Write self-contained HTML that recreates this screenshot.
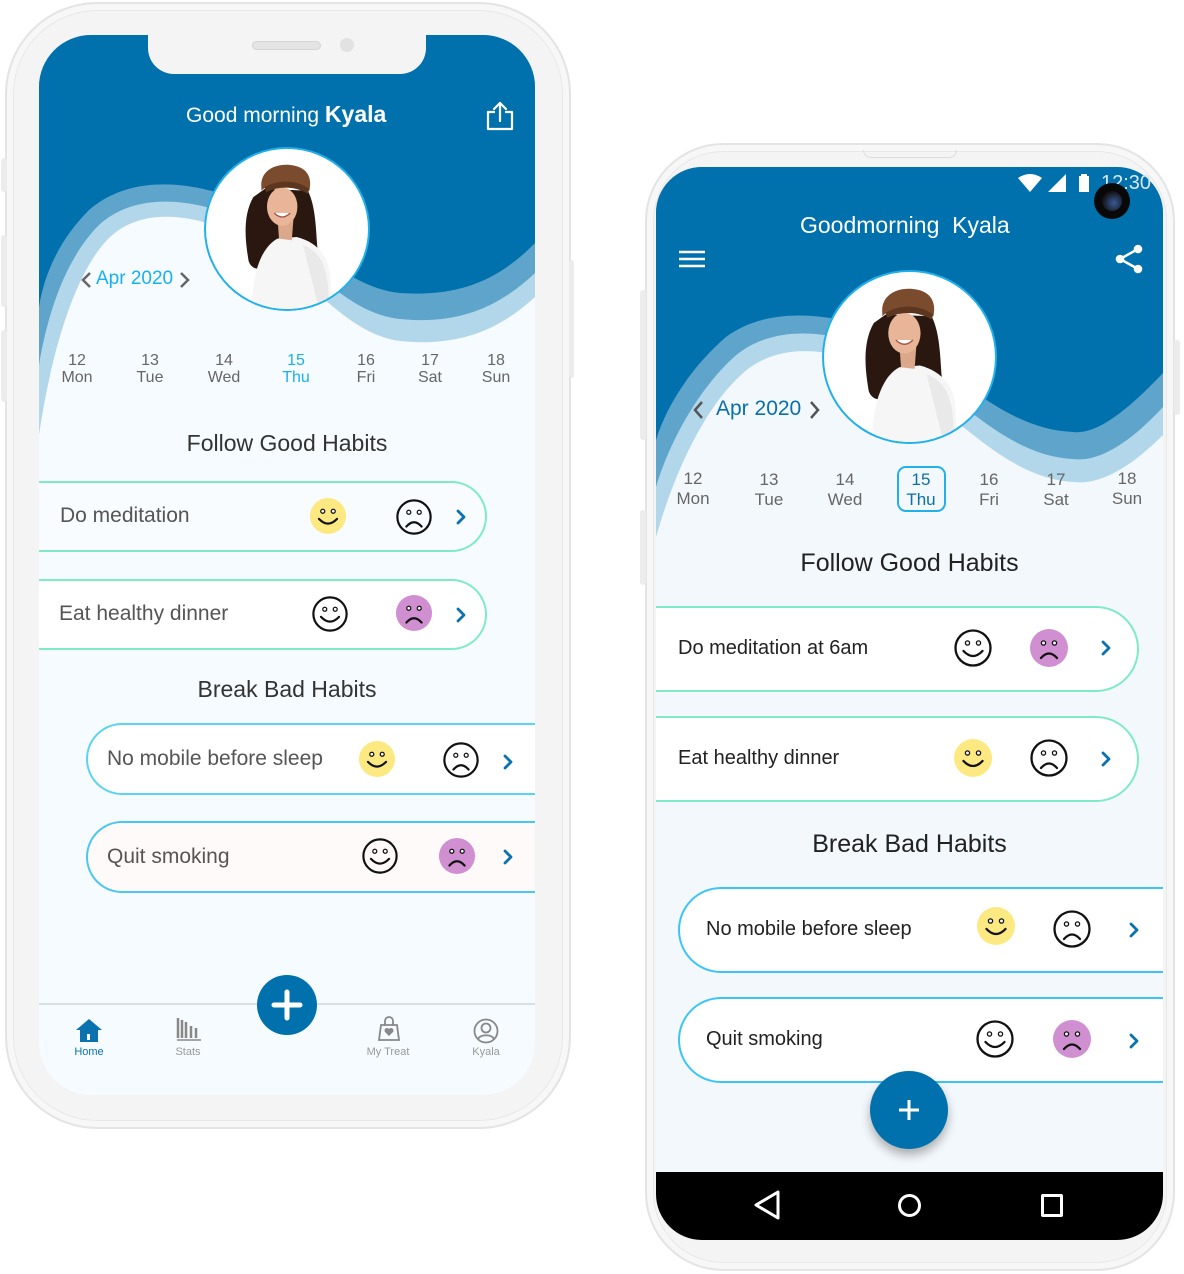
<!DOCTYPE html>
<html><head><meta charset="utf-8">
<style>
*{margin:0;padding:0;box-sizing:border-box}
body{width:1184px;height:1274px;background:#fff;position:relative;overflow:hidden;font-family:"Liberation Sans",sans-serif}
.a{position:absolute}
.t{position:absolute;white-space:nowrap}
.frame{position:absolute;background:#f4f4f4;border:2px solid #e4e4e4;box-shadow:inset 0 0 0 6px #f7f7f7, inset 0 0 0 7px #e8e8e8}
.scr{position:absolute;overflow:hidden}
.card{position:absolute;background:#fff}
.day{position:absolute;width:60px;text-align:center;font-size:16px;line-height:17px;color:#666}
</style></head><body>
<svg width="0" height="0" style="position:absolute">
<defs>
<symbol id="hap" viewBox="0 0 40 40"><circle cx="20" cy="20" r="17.5" fill="none" stroke="#111" stroke-width="2.3"/><circle cx="14.5" cy="15" r="2.1" fill="#fff" stroke="#111" stroke-width="1.3"/><circle cx="25.5" cy="15" r="2.1" fill="#fff" stroke="#111" stroke-width="1.3"/><path d="M10.5 23 Q20 33 29.5 23" fill="none" stroke="#111" stroke-width="2.3" stroke-linecap="round"/></symbol>
<symbol id="sad" viewBox="0 0 40 40"><circle cx="20" cy="20" r="17.5" fill="none" stroke="#111" stroke-width="2.3"/><circle cx="14.5" cy="15" r="2.1" fill="#fff" stroke="#111" stroke-width="1.3"/><circle cx="25.5" cy="15" r="2.1" fill="#fff" stroke="#111" stroke-width="1.3"/><path d="M12 30 Q20 21 28 30" fill="none" stroke="#111" stroke-width="2.3" stroke-linecap="round"/></symbol>
<symbol id="yel" viewBox="0 0 40 40"><circle cx="20" cy="20" r="19" fill="#fde981"/><circle cx="14.5" cy="15" r="2.1" fill="#fff" stroke="#111" stroke-width="1.3"/><circle cx="25.5" cy="15" r="2.1" fill="#fff" stroke="#111" stroke-width="1.3"/><path d="M10.5 23 Q20 33 29.5 23" fill="none" stroke="#111" stroke-width="2.3" stroke-linecap="round"/></symbol>
<symbol id="pur" viewBox="0 0 40 40"><circle cx="20" cy="20" r="19" fill="#d08fd1"/><circle cx="14.5" cy="15" r="2.1" fill="#fff" stroke="#111" stroke-width="1.3"/><circle cx="25.5" cy="15" r="2.1" fill="#fff" stroke="#111" stroke-width="1.3"/><path d="M12 30 Q20 21 28 30" fill="none" stroke="#111" stroke-width="2.3" stroke-linecap="round"/></symbol>
<symbol id="chev" viewBox="0 0 20 20"><path d="M7 4 L13 10 L7 16" fill="none" stroke="#0b72b0" stroke-width="2.8" stroke-linecap="round" stroke-linejoin="round"/></symbol>
<symbol id="av" viewBox="0 0 100 100"><circle cx="50" cy="50" r="50" fill="#fff"/>
<path d="M29 30 C22 42 24 58 26 70 C28 76 34 76 40 73 L46 70 L58 70 C64 73 70 72 69 62 C68 50 68 36 63 26 L36 25 Z" fill="#2a1810"/>
<path d="M28 100 C28 80 33 62 44 56 L56 55 C68 58 76 66 77 80 L78 100 Z" fill="#f6f6f6"/>
<path d="M60 60 C70 64 76 72 76 95 L70 100" fill="#e9e9e9"/>
<path d="M44 42 L45 56 L53 57 L54 44 Z" fill="#dba88c"/>
<ellipse cx="47" cy="36" rx="9.5" ry="12" fill="#e8b598"/>
<path d="M42 40 Q47 45 52 40" fill="#fff" stroke="#a6564a" stroke-width="0.8"/>
<path d="M34 24 C33 14 42 9 52 10 C62 11 66 17 64 26 C60 23 52 20 46 21 C40 22 36 24 34 26 Z" fill="#7b4b2e"/>
<path d="M36 24 C44 19 56 19 64 25 L63 28 C55 23 45 23 37 27 Z" fill="#5d361f"/>
</symbol>
</defs></svg>

<!-- LEFT PHONE -->
<div class="frame" style="left:5px;top:2px;width:566px;height:1127px;border-radius:92px"></div>
<div class="a" style="left:1px;top:158px;width:6px;height:34px;background:#ececec;border-radius:3px"></div>
<div class="a" style="left:1px;top:235px;width:6px;height:72px;background:#ececec;border-radius:3px"></div>
<div class="a" style="left:1px;top:330px;width:6px;height:72px;background:#ececec;border-radius:3px"></div>
<div class="a" style="left:569px;top:260px;width:5px;height:118px;background:#ececec;border-radius:3px"></div>
<div class="scr" style="left:39px;top:35px;width:496px;height:1060px;border-radius:52px;background:#f5fbfe">
<svg class="a" style="left:0;top:0" width="496" height="420">
<path d="M0,0 H496 V262 C460,295 420,312 361,306 C300,298 260,226 200,199 C150,178 100,172 68,205 C40,235 15,300 0,400 Z" fill="#b3d7ea"/>
<path d="M0,0 H496 V238 C460,272 420,290 361,284 C300,278 260,210 200,183 C150,162 95,158 60,190 C30,220 10,270 0,330 Z" fill="#5fa5cb"/>
<path d="M0,0 H496 V208 C460,245 420,262 361,258 C300,252 260,190 200,165 C150,145 90,140 50,175 C20,205 5,240 0,272 Z" fill="#0071ad"/>
</svg>
<div class="a" style="left:109px;top:0;width:278px;height:39px;background:#f4f4f4;border-radius:0 0 26px 26px"></div>
<div class="a" style="left:213px;top:6px;width:69px;height:9px;background:#e4e4e4;border:1px solid #d4d4d4;border-radius:5px"></div>
<div class="a" style="left:301px;top:3px;width:14px;height:14px;background:#e2e2e2;border-radius:50%"></div>
</div>
<div class="t" style="left:186px;top:101px;color:#fff;font-size:21px">Good morning <b style="font-size:23px">Kyala</b></div>
<svg class="a" style="left:485px;top:101px" width="30" height="30" viewBox="0 0 30 30"><path d="M10 11 H3 V28 H27 V11 H20" fill="none" stroke="#fff" stroke-width="2.2" stroke-linejoin="round"/><path d="M15 20 V2 M9 8 L15 2 L21 8" fill="none" stroke="#fff" stroke-width="2.2" stroke-linecap="round" stroke-linejoin="round"/></svg>
<div class="a" style="left:204px;top:147px;width:166px;height:164px;border-radius:50%;border:2px solid #22b0ea;overflow:hidden;background:#fff"><svg width="162" height="160"><use href="#av" width="162" height="160"/></svg></div>
<svg class="a" style="left:80px;top:271px" width="14" height="18" viewBox="0 0 14 18"><path d="M10 2 L3 9 L10 16" fill="none" stroke="#666" stroke-width="2.5"/></svg>
<div class="t" style="left:96px;top:268px;color:#1ab0f0;font-size:19px">Apr 2020</div>
<svg class="a" style="left:177px;top:271px" width="14" height="18" viewBox="0 0 14 18"><path d="M4 2 L11 9 L4 16" fill="none" stroke="#666" stroke-width="2.5"/></svg>
<div class="day" style="left:47px;top:352px">12<br>Mon</div>
<div class="day" style="left:120px;top:352px">13<br>Tue</div>
<div class="day" style="left:194px;top:352px">14<br>Wed</div>
<div class="day" style="left:266px;top:352px;color:#1ab0f0">15<br>Thu</div>
<div class="day" style="left:336px;top:352px">16<br>Fri</div>
<div class="day" style="left:400px;top:352px">17<br>Sat</div>
<div class="day" style="left:466px;top:352px">18<br>Sun</div>
<div class="t" style="left:0;width:574px;text-align:center;top:430px;font-size:23px;color:#333">Follow Good Habits</div>
<div class="card" style="left:39px;top:481px;width:448px;height:71px;border:2px solid #7eebc5;border-left:none;border-radius:0 36px 36px 0;background:#f8fcfe"></div>
<div class="t" style="left:60px;top:504px;font-size:21px;color:#555">Do meditation</div>
<svg class="a" style="left:309px;top:497px" width="38" height="38"><use href="#yel" width="38" height="38"/></svg>
<svg class="a" style="left:395px;top:498px" width="38" height="38"><use href="#sad" width="38" height="38"/></svg>
<svg class="a" style="left:451px;top:507px" width="20" height="20"><use href="#chev" width="20" height="20"/></svg>
<div class="card" style="left:39px;top:579px;width:448px;height:71px;border:2px solid #7eebc5;border-left:none;border-radius:0 36px 36px 0"></div>
<div class="t" style="left:59px;top:602px;font-size:21px;color:#555">Eat healthy dinner</div>
<svg class="a" style="left:311px;top:595px" width="38" height="38"><use href="#hap" width="38" height="38"/></svg>
<svg class="a" style="left:395px;top:594px" width="38" height="38"><use href="#pur" width="38" height="38"/></svg>
<svg class="a" style="left:451px;top:605px" width="20" height="20"><use href="#chev" width="20" height="20"/></svg>
<div class="t" style="left:0;width:574px;text-align:center;top:676px;font-size:23px;color:#333">Break Bad Habits</div>
<div class="card" style="left:86px;top:723px;width:449px;height:72px;border:2px solid #5dd3f3;border-right:none;border-radius:36px 0 0 36px"></div>
<div class="t" style="left:107px;top:747px;font-size:21px;color:#555">No mobile before sleep</div>
<svg class="a" style="left:358px;top:740px" width="38" height="38"><use href="#yel" width="38" height="38"/></svg>
<svg class="a" style="left:442px;top:741px" width="38" height="38"><use href="#sad" width="38" height="38"/></svg>
<svg class="a" style="left:498px;top:752px" width="20" height="20"><use href="#chev" width="20" height="20"/></svg>
<div class="card" style="left:86px;top:821px;width:449px;height:72px;border:2px solid #4cc6f3;border-right:none;border-radius:36px 0 0 36px;background:#fffafa"></div>
<div class="t" style="left:107px;top:845px;font-size:21px;color:#555">Quit smoking</div>
<svg class="a" style="left:361px;top:837px" width="38" height="38"><use href="#hap" width="38" height="38"/></svg>
<svg class="a" style="left:438px;top:837px" width="38" height="38"><use href="#pur" width="38" height="38"/></svg>
<svg class="a" style="left:498px;top:847px" width="20" height="20"><use href="#chev" width="20" height="20"/></svg>
<div class="a" style="left:39px;top:1003px;width:496px;height:2px;background:#d8e0e5"></div>
<div class="a" style="left:257px;top:975px;width:60px;height:60px;border-radius:50%;background:#0071ad"></div>
<svg class="a" style="left:257px;top:975px" width="60" height="60"><path d="M30 17 V43 M17 30 H43" stroke="#fff" stroke-width="5" stroke-linecap="round"/></svg>
<svg class="a" style="left:75px;top:1017px" width="28" height="26" viewBox="0 0 28 26"><path d="M14 2 L27 13 H23 V25 H5 V13 H1 Z" fill="#0b72b0"/><rect x="12" y="17" width="3" height="6" fill="#fff"/></svg>
<div class="t" style="left:64px;top:1046px;width:50px;text-align:center;font-size:11px;color:#0b72b0">Home</div>
<svg class="a" style="left:176px;top:1016px" width="26" height="26" viewBox="0 0 26 26"><path d="M1 24 H25" stroke="#888" stroke-width="1.5"/><path d="M2 2 V22 M6 4 V22 M10 6 V22 M15 10 V22 M20 12 V22" stroke="#888" stroke-width="2.5"/></svg>
<div class="t" style="left:163px;top:1046px;width:50px;text-align:center;font-size:11px;color:#999">Stats</div>
<svg class="a" style="left:377px;top:1016px" width="24" height="26" viewBox="0 0 24 26"><path d="M4 9 H20 L22 24 H2 Z" fill="none" stroke="#888" stroke-width="1.8"/><path d="M8 10 V5 A4 4 0 0 1 16 5 V10" fill="none" stroke="#888" stroke-width="1.8"/><path d="M12 20 L8 16 A2 2 0 0 1 12 13 A2 2 0 0 1 16 16 Z" fill="#888"/></svg>
<div class="t" style="left:358px;top:1046px;width:60px;text-align:center;font-size:11px;color:#999">My Treat</div>
<svg class="a" style="left:473px;top:1018px" width="26" height="26" viewBox="0 0 26 26"><circle cx="13" cy="13" r="11.5" fill="none" stroke="#888" stroke-width="1.8"/><circle cx="13" cy="10" r="4.5" fill="none" stroke="#888" stroke-width="1.8"/><path d="M5 21 C7 16 19 16 21 21" fill="none" stroke="#888" stroke-width="1.8"/></svg>
<div class="t" style="left:461px;top:1046px;width:50px;text-align:center;font-size:11px;color:#999">Kyala</div>

<!-- RIGHT PHONE -->
<div class="frame" style="left:645px;top:143px;width:530px;height:1128px;border-radius:78px"></div>
<div class="a" style="left:640px;top:290px;width:6px;height:150px;background:#ececec;border-radius:3px"></div>
<div class="a" style="left:640px;top:510px;width:6px;height:75px;background:#ececec;border-radius:3px"></div>
<div class="a" style="left:1174px;top:340px;width:6px;height:75px;background:#ececec;border-radius:3px"></div>
<div class="a" style="left:863px;top:150px;width:94px;height:8px;border:1px solid #ddd;border-top:none;border-radius:0 0 8px 8px"></div>
<div class="scr" style="left:656px;top:167px;width:507px;height:1073px;border-radius:46px;background:#f3f8fc">
<svg class="a" style="left:0;top:0" width="507" height="420">
<path d="M0,0 H507 V268 C470,305 440,318 417,315 C340,310 290,230 220,200 C170,180 120,175 85,208 C50,240 20,300 0,370 Z" fill="#b3d7ea"/>
<path d="M0,0 H507 V240 C470,280 440,295 417,292 C340,288 290,210 220,182 C170,162 115,158 78,190 C45,220 15,270 0,320 Z" fill="#5fa5cb"/>
<path d="M0,0 H507 V206 C470,245 440,268 417,265 C340,262 290,190 220,163 C170,145 110,140 70,170 C35,200 10,240 0,273 Z" fill="#0071ad"/>
</svg>
<div class="a" style="left:0;top:1005px;width:507px;height:68px;background:#000"></div>
</div>
<svg class="a" style="left:1017px;top:173px" width="80" height="20" viewBox="0 0 80 20"><path d="M1 5 Q13 -3 25 5 L13 19 Z" fill="#fff"/><path d="M49 1 V19 H31 Z" fill="#fff"/><rect x="62" y="3" width="10" height="16" fill="#fff"/><rect x="64" y="1" width="6" height="3" fill="#fff"/></svg>
<div class="t" style="left:1101px;top:172px;font-size:20px;color:#d8e6f0">12:30</div>
<div class="a" style="left:1094px;top:183px;width:36px;height:36px;border-radius:50%;background:#080808"></div>
<div class="a" style="left:1102px;top:191px;width:20px;height:20px;border-radius:50%;background:radial-gradient(circle at 60% 60%,#3a5a9a,#111 70%)"></div>
<div class="t" style="left:800px;top:212px;color:#fff;font-size:23px">Goodmorning&nbsp; Kyala</div>
<svg class="a" style="left:678px;top:249px" width="28" height="20"><path d="M1 3 H27 M1 10 H27 M1 17 H27" stroke="#fff" stroke-width="2.6"/></svg>
<svg class="a" style="left:1114px;top:243px" width="30" height="32" viewBox="0 0 30 32"><circle cx="24" cy="6" r="4.3" fill="#fff"/><circle cx="6" cy="16" r="4.3" fill="#fff"/><circle cx="24" cy="26" r="4.3" fill="#fff"/><path d="M24 6 L6 16 L24 26" fill="none" stroke="#fff" stroke-width="2.5"/></svg>
<div class="a" style="left:822px;top:270px;width:175px;height:174px;border-radius:50%;border:2px solid #22b0ea;overflow:hidden;background:#fff"><svg width="171" height="170"><use href="#av" width="171" height="170"/></svg></div>
<svg class="a" style="left:692px;top:400px" width="14" height="20" viewBox="0 0 14 20"><path d="M10 2 L3 10 L10 18" fill="none" stroke="#555" stroke-width="2.5"/></svg>
<div class="t" style="left:716px;top:397px;color:#0b6fab;font-size:21px">Apr 2020</div>
<svg class="a" style="left:807px;top:400px" width="14" height="20" viewBox="0 0 14 20"><path d="M4 2 L11 10 L4 18" fill="none" stroke="#555" stroke-width="2.5"/></svg>
<div class="a" style="left:897px;top:466px;width:49px;height:46px;border:2px solid #22b0ea;border-radius:9px"></div>
<div class="day" style="left:663px;top:469px;font-size:17px;line-height:20px">12<br>Mon</div>
<div class="day" style="left:739px;top:470px;font-size:17px;line-height:20px">13<br>Tue</div>
<div class="day" style="left:815px;top:470px;font-size:17px;line-height:20px">14<br>Wed</div>
<div class="day" style="left:891px;top:470px;font-size:17px;line-height:20px;color:#0b6fab">15<br>Thu</div>
<div class="day" style="left:959px;top:470px;font-size:17px;line-height:20px">16<br>Fri</div>
<div class="day" style="left:1026px;top:470px;font-size:17px;line-height:20px">17<br>Sat</div>
<div class="day" style="left:1097px;top:469px;font-size:17px;line-height:20px">18<br>Sun</div>
<div class="t" style="left:656px;width:507px;text-align:center;top:549px;font-size:25px;color:#222">Follow Good Habits</div>
<div class="card" style="left:656px;top:606px;width:483px;height:86px;border:2px solid #7eebc5;border-left:none;border-radius:0 43px 43px 0"></div>
<div class="t" style="left:678px;top:637px;font-size:20px;color:#222">Do meditation at 6am</div>
<svg class="a" style="left:953px;top:628px" width="40" height="40"><use href="#hap" width="40" height="40"/></svg>
<svg class="a" style="left:1029px;top:628px" width="40" height="40"><use href="#pur" width="40" height="40"/></svg>
<svg class="a" style="left:1096px;top:638px" width="20" height="20"><use href="#chev" width="20" height="20"/></svg>
<div class="card" style="left:656px;top:716px;width:483px;height:86px;border:2px solid #7eebc5;border-left:none;border-radius:0 43px 43px 0"></div>
<div class="t" style="left:678px;top:747px;font-size:20px;color:#222">Eat healthy dinner</div>
<svg class="a" style="left:953px;top:738px" width="40" height="40"><use href="#yel" width="40" height="40"/></svg>
<svg class="a" style="left:1029px;top:738px" width="40" height="40"><use href="#sad" width="40" height="40"/></svg>
<svg class="a" style="left:1096px;top:749px" width="20" height="20"><use href="#chev" width="20" height="20"/></svg>
<div class="t" style="left:656px;width:507px;text-align:center;top:830px;font-size:25px;color:#222">Break Bad Habits</div>
<div class="card" style="left:678px;top:887px;width:485px;height:86px;border:2px solid #3cc4f6;border-right:none;border-radius:43px 0 0 43px"></div>
<div class="t" style="left:706px;top:918px;font-size:20px;color:#222">No mobile before sleep</div>
<svg class="a" style="left:976px;top:906px" width="40" height="40"><use href="#yel" width="40" height="40"/></svg>
<svg class="a" style="left:1052px;top:909px" width="40" height="40"><use href="#sad" width="40" height="40"/></svg>
<svg class="a" style="left:1124px;top:920px" width="20" height="20"><use href="#chev" width="20" height="20"/></svg>
<div class="card" style="left:678px;top:997px;width:485px;height:86px;border:2px solid #3cc4f6;border-right:none;border-radius:43px 0 0 43px"></div>
<div class="t" style="left:706px;top:1028px;font-size:20px;color:#222">Quit smoking</div>
<svg class="a" style="left:975px;top:1019px" width="40" height="40"><use href="#hap" width="40" height="40"/></svg>
<svg class="a" style="left:1052px;top:1019px" width="40" height="40"><use href="#pur" width="40" height="40"/></svg>
<svg class="a" style="left:1124px;top:1031px" width="20" height="20"><use href="#chev" width="20" height="20"/></svg>
<div class="a" style="left:870px;top:1071px;width:78px;height:78px;border-radius:50%;background:#0071ad;box-shadow:0 6px 10px rgba(0,0,0,0.3)"></div>
<svg class="a" style="left:870px;top:1071px" width="78" height="78"><path d="M39 29 V49 M29 39 H49" stroke="#fff" stroke-width="3"/></svg>
<svg class="a" style="left:750px;top:1187px" width="36" height="36" viewBox="0 0 36 36"><path d="M28 5 V31 L6 18 Z" fill="none" stroke="#fff" stroke-width="3" stroke-linejoin="round"/></svg>
<div class="a" style="left:898px;top:1194px;width:23px;height:23px;border:3px solid #fff;border-radius:50%"></div>
<div class="a" style="left:1041px;top:1194px;width:22px;height:23px;border:3px solid #fff;border-radius:2px"></div>
</body></html>
